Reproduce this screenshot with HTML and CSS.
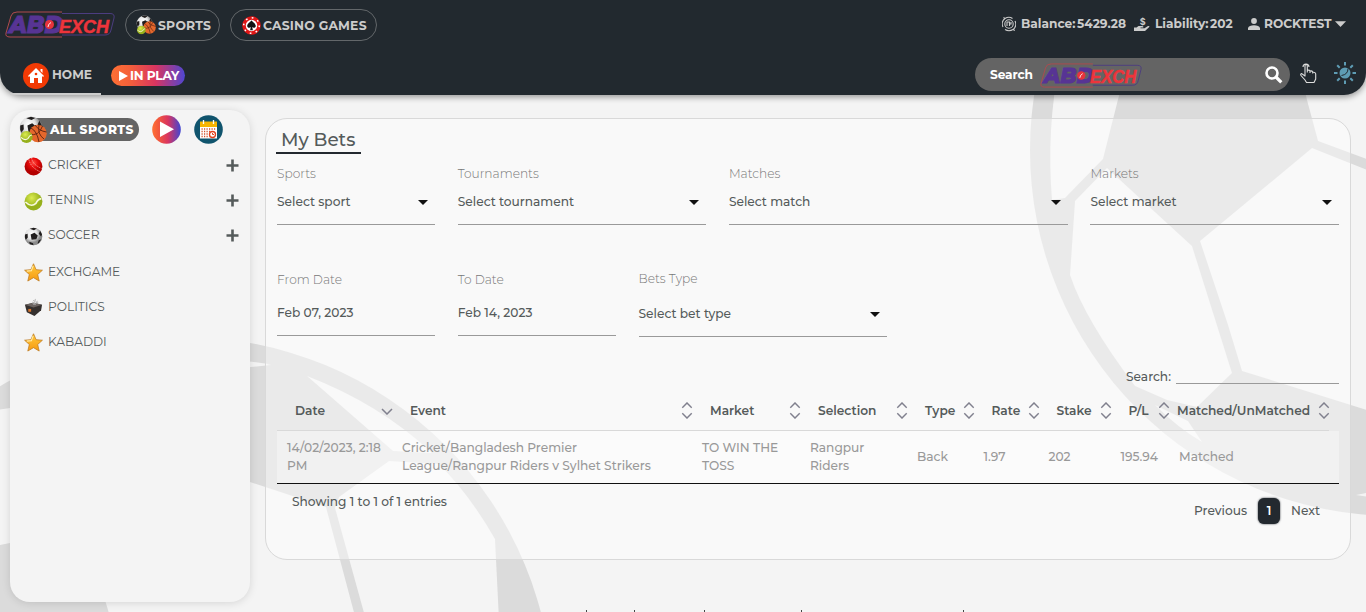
FILE: index.html
```html
<!DOCTYPE html>
<html lang="en">
<head>
<meta charset="utf-8">
<title>My Bets</title>
<link rel="stylesheet" href="styles.css">
</head>
<body>
<svg class="defs" width="0" height="0">
  <defs>
    <linearGradient id="hot"><stop offset="0" stop-color="#ff7034"/><stop offset=".2" stop-color="#f45a3a"/><stop offset=".55" stop-color="#d93560"/><stop offset="1" stop-color="#4146d2"/></linearGradient>
    <radialGradient id="red" cx=".5" cy=".3"><stop offset="0" stop-color="#ff5046"/><stop offset=".5" stop-color="#e80b0b"/><stop offset="1" stop-color="#b30000"/></radialGradient>
    <radialGradient id="lime" cx=".4" cy=".3"><stop offset="0" stop-color="#dcec50"/><stop offset="1" stop-color="#96b01c"/></radialGradient>
    <radialGradient id="grey" cx=".4" cy=".35"><stop offset="0" stop-color="#fff"/><stop offset=".6" stop-color="#e4e4e4"/><stop offset="1" stop-color="#8c8c8c"/></radialGradient>
    <linearGradient id="gold" x2="0" y2="1"><stop offset="0" stop-color="#ffc93c"/><stop offset="1" stop-color="#f79a10"/></linearGradient>
    <symbol id="logo" viewBox="0 0 110 27">
      <path d="M57 1H12Q7 1 6 5L1 22Q0 26 5 26H57" fill="none" stroke="#b04a4e"/>
      <path d="M57 2.500H105Q110 2.500 109 7L106 19Q105 24 100 24H57" fill="none" stroke="#4c3d80"/>
      <text x="4" y="21.500" class="logo-a" textLength="54" lengthAdjust="spacingAndGlyphs">ABD</text>
      <text x="54" y="21.500" class="logo-b" textLength="50" lengthAdjust="spacingAndGlyphs">EXCH</text>
      <circle cx="44.500" cy="13.500" r="4.500" fill="#e8343c"/><path d="M43 16q0-3 3-4.500" stroke="#fff" stroke-width=".9" fill="none"/>
    </symbol>
    <symbol id="soccer" viewBox="0 0 20 20">
      <circle cx="10" cy="10" r="9.300" fill="url(#grey)"/>
      <path d="M7 8l4-2 3.500 3-1.500 4-5 .5zM6 1.800l4-1.100 3.500.9-3 1.800zM1 8l2.800-1L4 11l-2 2.500-1-2zM17 4l2 4-1 2-2.500-3zM5.500 15.500l4 1.500.5 2.200-4-1.200zM15.500 14l2.700-1-2.700 4.200-1.300.2z" fill="#201d1d"/>
    </symbol>
    <symbol id="tennis" viewBox="0 0 20 20"><circle cx="10" cy="10" r="9.400" fill="url(#lime)"/><path d="M1.500 10.500q6 6 11 1.500 2-4.500 5.800-5" stroke="#f7f9df" stroke-width="1.700" fill="none"/></symbol>
    <symbol id="balls" viewBox="0 0 28 28">
      <svg x="0" y="0" width="24" height="24"><use href="#soccer"/></svg>
      <circle cx="19" cy="17.500" r="8.700" fill="#e4672c"/>
      <path d="M12 12q6 3 8 14M16 9q4 6 11.500 7M10.500 18q9 3 13-8M20 9q-2 9 5 14" fill="none" stroke="#5b2311" stroke-width=".9"/>
      <svg x="1" y="14.500" width="13" height="13"><use href="#tennis"/></svg>
    </symbol>
    <symbol id="cricket" viewBox="0 0 20 20"><circle cx="10" cy="10" r="9.400" fill="url(#red)"/><path d="M8 1q1 7 10.500 11M5 2.500Q7 11 17 15.500" fill="none" stroke="#f6a39b" stroke-width="1" stroke-dasharray="1.500 1"/></symbol>
    <symbol id="star" viewBox="0 0 20 20"><path d="M10 .8l2.700 6.200 6.700.6-5 4.500 1.600 6.900L10 15.400 4 19l1.600-6.900-5-4.500 6.700-.6z" fill="url(#gold)" stroke="#bd7a20" stroke-width=".8"/><path d="M9.600 3L7.800 8 3 8.500" fill="none" stroke="#ffe9a6" stroke-width="1.200"/></symbol>
    <symbol id="politics" viewBox="0 0 20 20"><path d="M1 7l9-2 9 2-1 6-7 6-8-4z" fill="#35302e"/><path d="M1 7l9-2 9 2-9 3z" fill="#6b6360"/><path d="M4.500 11.500h3v3h-3z" fill="#d8752d"/><path d="M9 4l1 3M12 1l-1 6M14 3l-2 4M9.500 2.500l2 1M13 4.500l2 0" stroke="#b5b5b5" stroke-width="1"/></symbol>
    <symbol id="sort" viewBox="0 0 12 18"><path d="M1 6l5-5 5 5M1 12l5 5 5-5" fill="none" stroke="#80808e" stroke-width="1.500"/></symbol>
    <symbol id="plus" viewBox="0 0 13 13"><path d="M6.500 0.500v12M.5 6.500h12" stroke="#555b5b" stroke-width="2.600"/></symbol>
  </defs>
</svg>

<svg class="backdrop" viewBox="0 0 1366 612">
  <circle cx="1396" cy="150" r="366" class="ball"/>
  <circle cx="184" cy="706" r="369" class="ball"/>
  <g class="patch">
    <path d="M1060 60Q1046 130 1052 200L1065 198 1103 159 1128 60z"/>
    <path d="M1075 201L1107 168 1192 246 1232 373 1197 407 1167 400 1135 386Q1085 320 1070 275z"/>
    <path d="M1200 241L1312 148 1380 175V414L1242 371 1228 325z"/>
    <path d="M1298 60L1307 100 1318 141 1380 164V60z"/>
    <path d="M1155 405L1188 421 1202 442Q1178 428 1155 405zM1356 495l20-4v7z"/>
    <path d="M225 360Q255 361 271 365L230 369z"/>
    <path d="M307 376Q380 404 432 453L393 451z"/>
    <path d="M389 461L439 464Q470 495 495 539L499 620H366L335 508 339 497z"/>
    <path d="M120 440L250 482 326 507 356 620H111L96 570 20 541 -10 547V411L30 405z"/>
  </g>
</svg>

<header class="topbar">
  <div class="row row-brand">
    <svg class="logo"><use href="#logo"/></svg>
    <a class="pill pill-sports"><svg width="20" height="20"><use href="#balls"/></svg><span>SPORTS</span></a>
    <a class="pill pill-casino"><svg width="19" height="19" viewBox="0 0 20 20"><circle cx="10" cy="10" r="9.800" fill="#e01616"/><circle cx="10" cy="10" r="8.200" fill="none" stroke="#fff" stroke-width="1.600" stroke-dasharray="1.800 4.640"/><circle cx="10" cy="10" r="6" fill="#fff"/><path d="M10 4.500c1 2 4.500 3.300 4.500 6 0 2-2.500 2.500-3.800 1.200L11.500 15h-3l.8-3.300C8 13 5.500 12.500 5.500 10.500c0-2.700 3.500-4 4.500-6z" fill="#111"/></svg><span>CASINO GAMES</span></a>
    <div class="account">
      <svg width="14" height="16" viewBox="0 0 14 16" fill="none" stroke="#ccc" stroke-width="1.100"><circle cx="7" cy="8" r="4.200"/><path d="M1 11A6.500 6.500 0 0 1 3 2.500L1.500 1.500M3 2.500q4-2.500 7.500 0M13 5a6.500 6.500 0 0 1-2 8.500l1.800 1M11 13.500q-4 2.500-8 0M5 10V6h2.500v4M7 8h2V6"/></svg>
      <span class="t-bal">Balance:</span><span class="t-balv">5429.28</span>
      <svg class="ico-hand" width="16" height="15" viewBox="0 0 16 15"><path d="M0 10.500h2.500L4.500 9h3.800q1.500.1 1 1.500H6.500v.7h4L14 9q1.500-.3 1.500.8L11 13.900H0z" fill="#ccc"/><text x="5.700" y="7.500" class="dollar">$</text></svg>
      <span class="t-lia">Liability:</span><span class="t-liav">202</span>
      <svg class="ico-user" width="12" height="12" viewBox="0 0 12 12" fill="#ccc"><circle cx="6" cy="3" r="2.900"/><path d="M0 12V10Q1 7.300 6 7.300T12 10v2z"/></svg>
      <span class="t-user">ROCKTEST</span>
      <svg class="ico-caret" width="11" height="6" viewBox="0 0 11 6"><path d="M0 .3h11L5.500 6z" fill="#ccc"/></svg>
    </div>
  </div>
  <div class="row row-nav">
    <a class="home"><svg width="26" height="26" viewBox="0 0 26 26"><circle cx="13" cy="13" r="13" fill="#f23a05"/><path d="M5 13l8-8 8 8-1 1-1-1v7h-4v-5h-4v5H7v-7l-1 1zM17.500 6h2v4l-2-2z" fill="#fff"/><circle cx="13" cy="11" r="1.300" fill="#f23a05"/></svg><span>HOME</span></a>
    <a class="inplay"><svg width="9" height="10" viewBox="0 0 9 10"><path d="M0 0l9 5-9 5z" fill="#fff"/></svg><span>IN PLAY</span></a>
    <div class="searchbox"><span>Search</span><svg class="logo-sm"><use href="#logo"/></svg><svg class="lens" width="18" height="18" viewBox="0 0 18 18" fill="none" stroke="#fff"><circle cx="7" cy="7" r="5.500" stroke-width="2.600"/><path d="M11 11l5.300 5.300" stroke-width="3.200"/></svg></div>
    <svg class="ico-tap" width="17" height="22" viewBox="0 0 17 22" fill="none" stroke="#ddd" stroke-width="1.100"><path d="M5 14.500V3.500q1-2 2.300 0V10.500M7.300 8.500q2-1 2.700.5V11M10 9q2-.5 2.700 1V11.500M12.700 10.300q2.500-.5 3 1.500V17L14 20.500H6.500L5 18 1 13.500q-.8-1.500.6-2L5 14M3 5a3 3 0 1 1 6 0"/></svg>
    <svg class="ico-sun" width="22" height="22" viewBox="0 0 22 22"><circle cx="11" cy="11" r="5.500" fill="#5e9cb4"/><path d="M14 6.500q0 6-6.500 7" stroke="#23292f" fill="none"/><path d="M11 0v3.500M11 18.500V22M0 11h3.500M18.500 11H22M3.200 3.200l2.500 2.500M16.300 16.300l2.500 2.500M3.200 18.800l2.500-2.500M16.300 5.700l2.500-2.500" stroke="#5e9cb4" stroke-width="2"/></svg>
  </div>
</header>

<div class="page">
  <aside class="sidebar">
    <div class="side-head">
      <svg class="all-ico" width="28" height="28"><use href="#balls"/></svg>
      <span class="all-pill"><span>ALL SPORTS</span></span>
      <svg class="round-play" width="29" height="29" viewBox="0 0 29 29"><circle cx="14.500" cy="14.500" r="14.300" fill="url(#hot)"/><path d="M8 6.500v15.500l14-7.700z" fill="#fff"/></svg>
      <svg width="29" height="29" viewBox="0 0 29 29"><circle cx="14.500" cy="14.500" r="14.300" fill="#10546d"/><path d="M6 7h17v16.500H6z" fill="#fff"/><path d="M6 6.500h17v5.500H6z" fill="#f7b500"/><path d="M9.500 5v4M19.500 5v4" stroke="#fff" stroke-width="1.300"/><path d="M7.500 14h14M7.500 16.500h9M7.500 19h8M7.500 21.500h8" stroke="#d2522c" stroke-width="1.300" stroke-dasharray="1.200 1.300"/><circle cx="18.500" cy="19.500" r="3" fill="#fff" stroke="#e2401c" stroke-width="1.300"/><path d="M18.500 18v1.500H20" fill="none" stroke="#e2401c"/></svg>
    </div>
    <a class="side-item"><svg class="si"><use href="#cricket"/></svg><span>CRICKET</span><svg class="plus"><use href="#plus"/></svg></a>
    <a class="side-item"><svg class="si"><use href="#tennis"/></svg><span>TENNIS</span><svg class="plus"><use href="#plus"/></svg></a>
    <a class="side-item side-last"><svg class="si"><use href="#soccer"/></svg><span>SOCCER</span><svg class="plus"><use href="#plus"/></svg></a>
    <a class="side-item up"><svg class="si"><use href="#star"/></svg><span>EXCHGAME</span></a>
    <a class="side-item up"><svg class="si"><use href="#politics"/></svg><span>POLITICS</span></a>
    <a class="side-item up"><svg class="si"><use href="#star"/></svg><span>KABADDI</span></a>
  </aside>

  <main class="panel">
    <h1 class="title">My Bets</h1>
    <div class="filters">
      <div class="field w2"><label>Sports</label><div class="value"><span>Select sport</span><i class="caret"></i></div></div>
      <div class="field w3"><label>Tournaments</label><div class="value"><span>Select tournament</span><i class="caret"></i></div></div>
      <div class="field w4"><label>Matches</label><div class="value"><span>Select match</span><i class="caret"></i></div></div>
      <div class="field w3"><label>Markets</label><div class="value"><span>Select market</span><i class="caret"></i></div></div>
    </div>
    <div class="filters second">
      <div class="field date w2"><label>From Date</label><div class="value"><span>Feb 07, 2023</span></div></div>
      <div class="field date w2"><label>To Date</label><div class="value"><span>Feb 14, 2023</span></div></div>
      <div class="field w3"><label>Bets Type</label><div class="value"><span>Select bet type</span><i class="caret"></i></div></div>
    </div>
    <div class="table-search"><span>Search:</span><i></i></div>
    <div class="grid head">
      <div><span>Date</span><svg class="sort-one" viewBox="0 0 12 7"><path d="M1 1l5 5 5-5" fill="none" stroke="#80808e" stroke-width="1.500"/></svg></div>
      <div><span>Event</span><svg class="sort"><use href="#sort"/></svg></div>
      <div><span>Market</span><svg class="sort"><use href="#sort"/></svg></div>
      <div><span>Selection</span><svg class="sort"><use href="#sort"/></svg></div>
      <div><span>Type</span><svg class="sort"><use href="#sort"/></svg></div>
      <div><span>Rate</span><svg class="sort"><use href="#sort"/></svg></div>
      <div><span>Stake</span><svg class="sort"><use href="#sort"/></svg></div>
      <div><span>P/L</span><svg class="sort"><use href="#sort"/></svg></div>
      <div class="h-match"><span>Matched/UnMatched</span><svg class="sort"><use href="#sort"/></svg></div>
    </div>
    <div class="grid bet">
      <div>14/02/2023, 2:18<br>PM</div>
      <div>Cricket/Bangladesh Premier<br>League/Rangpur Riders v Sylhet Strikers</div>
      <div>TO WIN THE<br>TOSS</div>
      <div>Rangpur<br>Riders</div>
      <div>Back</div><div>1.97</div><div>202</div><div>195.94</div><div>Matched</div>
    </div>
    <div class="foot">
      <span class="info">Showing 1 to 1 of 1 entries</span>
      <div class="pager"><span class="prev">Previous</span><b>1</b><span class="next">Next</span></div>
    </div>
  </main>
</div>
<footer class="links"><i class="k1"></i><i class="k2"></i><i class="k3"></i><i class="k4"></i><i class="k5"></i></footer>
</body>
</html>
```
FILE: styles.css
```css
* { box-sizing: border-box; }
body { margin: 0; width: 1366px; height: 612px; overflow: hidden; background: #f4f4f4; font: 500 12.2px/18px Montserrat, Inter, sans-serif; color: #555b5b; position: relative; white-space: nowrap; }
svg { flex: none; display: block; }
.defs { position: absolute; }
.backdrop { position: absolute; left: 0; top: 0; width: 1366px; height: 612px; z-index: -1; }
.ball { fill: #dbdbdb; }
.patch { fill: #f4f4f4; }

.topbar { height: 95px; background: #22292f; border-radius: 0 0 22px 22px; box-shadow: 0 2px 6px rgba(0,0,0,.4); color: #ccc; font-weight: 700; }
.row { display: flex; align-items: center; }
.row-brand { height: 50px; padding: 0 20px 1px 5px; }
.logo { width: 110px; height: 27px; margin-right: 10px; }
.logo-a { font: italic 800 23.500px Montserrat, "DejaVu Sans", sans-serif; fill: #573494; stroke: #573494; stroke-width: 1; }
.logo-b { font: italic 700 19px "Liberation Sans", sans-serif; fill: #ee343b; stroke: #ee343b; stroke-width: .5; }
.pill { display: flex; align-items: center; height: 32px; border: 1px solid #63676a; border-radius: 16px; margin-top: 1px; }
.pill span { margin-top: 1px; font-size: 12.4px; letter-spacing: .2px; }
.pill-sports { width: 95px; padding-left: 10px; gap: 2px; margin-right: 10px; }
.pill-casino { width: 147px; padding-left: 11px; gap: 2px; }
.account { margin-left: auto; display: flex; align-items: center; height: 48px; align-self: flex-start; }
.t-bal { width: 53px; margin-left: 5px; }
.t-balv { width: 48px; margin-left: 3px; }
.ico-hand { margin-left: 9px; }
.dollar { font: 700 9px Inter, sans-serif; fill: #ccc; }
.t-lia { width: 52px; margin-left: 5px; }
.t-liav { width: 23px; margin-left: 3px; }
.ico-user { margin-left: 15px; }
.t-user { width: 67px; margin-left: 4px; }
.ico-caret { margin-left: 4px; }
.row-nav { height: 45px; align-items: flex-start; padding-left: 10px; }
.home { display: flex; align-items: flex-start; gap: 3px; width: 91px; height: 45px; padding: 13px 0 0 13px; border-bottom: 2px solid #ccc; }
.home span { line-height: 23px; }
.inplay { display: flex; align-items: center; gap: 2px; width: 74px; height: 21px; margin: 15px 0 0 10px; padding-left: 8px; border-radius: 11px; color: #fff; background: linear-gradient(90deg, #ff7034, #f4603a 25%, #d93560 60%, #4f46d2); }
.inplay span { letter-spacing: -.2px; }
.searchbox { display: flex; align-items: center; width: 315px; height: 33px; margin: 8px 0 0 auto; padding-left: 15px; border-radius: 17px; background: #646464; color: #fff; }
.searchbox > span { width: 50px; letter-spacing: -.1px; }
.logo-sm { width: 102px; height: 25px; margin-top: 2px; }
.lens { margin-left: auto; margin-right: 7px; }
.ico-tap { margin: 12px 0 0 10px; }
.ico-sun { margin: 12px 10px 0 17px; }

.page { display: flex; align-items: flex-start; }
.sidebar { width: 240px; height: 492px; margin: 15px 15px 0 10px; background: #f4f4f4; border-radius: 20px; box-shadow: 0 1px 8px rgba(0,0,0,.13); }
.side-head { display: flex; align-items: center; height: 38px; padding: 1px 0 0 9px; }
.all-ico { position: relative; z-index: 1; }
.all-pill { width: 105px; height: 23px; margin-left: -13px; padding-left: 16px; background: #646464; border-radius: 0 12px 12px 0; color: #fff; font-weight: 800; line-height: 23px; }
.all-pill span { letter-spacing: .4px; }
.round-play { margin: 0 13px 0 13px; }
.side-item { display: flex; align-items: center; height: 35px; padding-left: 14px; font-weight: 400; }
.side-item span { margin-left: 5px; margin-bottom: 2px; }
.side-last { margin-bottom: 2px; }
.si { width: 19px; height: 19px; margin-top: 2px; }
.up .si { margin-top: 0; }
.plus { width: 13px; height: 13px; margin-left: auto; margin-right: 11px; }

.panel { width: 1086px; height: 442px; margin-top: 23px; border: 1px solid #d9d9d9; border-radius: 22px; background: rgba(255,255,255,.42); padding: 10px 11px 0; }
.title { margin: 0 0 0 -1px; width: 85px; height: 25px; padding-left: 5px; border-bottom: 2px solid #23292f; font-size: 18.300px; line-height: 22px; font-weight: 500; }
.filters { display: grid; grid-template-columns: repeat(12, minmax(0, 1fr)); column-gap: 22.600px; margin-top: 11px; }
.w2 { grid-column: span 2; } .w3 { grid-column: span 3; } .w4 { grid-column: span 4; }
.field { height: 60px; border-bottom: 1px solid #9a9a9a; }
.field label { display: block; height: 18px; font-weight: 300; color: #777; }
.value { display: flex; justify-content: space-between; align-items: center; padding: 0 7px 0 0; margin-top: 10px; }
.caret { border: 5px solid transparent; border-top-color: #111; border-bottom: 0; }
.second { margin-top: 44px; }
.second .field { height: 68px; padding-top: 1px; }
.second .value { margin-top: 17px; }
.second .date { height: 67px; padding-top: 2px; }
.second .date .value { margin-top: 15px; }
.table-search { display: flex; justify-content: flex-end; height: 17px; margin-top: 30px; }
.table-search span { width: 50px; line-height: 20px; }
.table-search i { width: 163px; border-bottom: 1px solid #9a9a9a; }
.grid { display: grid; grid-template-columns: 115px 300px 108px 107px 66.500px 65px 72px 58.500px 170px; width: 1062px; }
.head { height: 47px; font-weight: 600; }
.head > div { display: flex; align-items: center; justify-content: space-between; padding: 7px 0 0 18px; border-bottom: 1px solid #d9d9d9; }
.head .h-match { padding-left: 8px; margin-right: 10px; }
.head svg { width: 12px; height: 17px; margin-right: -1px; }
.head .sort-one { height: 7px; margin-top: 2px; }
.bet { height: 53px; background: rgba(255,255,255,.35); border-bottom: 1px solid #111; color: #999; align-items: center; }
.bet > div { padding-left: 10px; }
.foot { display: flex; justify-content: space-between; padding: 9px 19px 0 15px; }
.pager { display: flex; align-items: center; margin-top: 4px; height: 28px; }
.pager b { width: 22px; height: 26px; margin: 0 11px; border-radius: 6px; background: #23292f; color: #fff; line-height: 26px; text-align: center; font-weight: 600; box-shadow: 0 0 2px #23292f; }
.prev { width: 53px; } .next { width: 29px; }
.links { display: flex; height: 2px; margin-top: 8px; }
.links i { border-right: 1px solid #444; }
.k1 { width: 587px; } .k2 { width: 48px; } .k3 { width: 70px; } .k4 { width: 97px; } .k5 { width: 162px; }
```
